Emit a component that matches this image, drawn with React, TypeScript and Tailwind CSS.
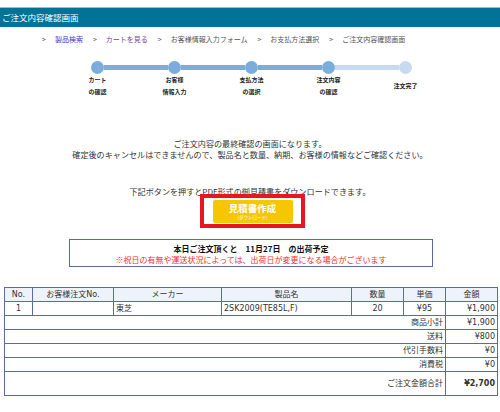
import React from 'react'

const crumbs = [
  { label: '製品検索', color: 'text-[#3a3ac8]' },
  { label: 'カートを見る', color: 'text-[#7b3fa0]' },
  { label: 'お客様情報入力フォーム', color: 'text-[#555]' },
  { label: 'お支払方法選択', color: 'text-[#555]' },
  { label: 'ご注文内容確認画面', color: 'text-[#555]' },
]

const steps = [
  ['カート', 'の確認'],
  ['お客様', '情報入力'],
  ['支払方法', 'の選択'],
  ['注文内容', 'の確認'],
  ['注文完了'],
]

const totals = [
  { label: '商品小計', value: '¥1,900' },
  { label: '送料', value: '¥800' },
  { label: '代引手数料', value: '¥0' },
  { label: '消費税', value: '¥0' },
]

const cell = 'border border-[#5b6aa8] px-[2px] h-[14px] leading-[12px]'

export default function App() {
  return (
    <div className="w-[500px] h-[412px] overflow-hidden bg-white text-[#333] font-['Noto_Sans_CJK_JP',sans-serif]">
      {/* Title bar */}
      <div className="mt-[7px] h-[20px] border-t border-[#8cc0d0] bg-[#007396] pl-[2px] text-[8.5px] leading-[19px] text-white">
        ご注文内容確認画面
      </div>

      {/* Breadcrumb */}
      <div className="mt-[6px] flex h-[12px] items-center pl-[42px] text-[7px] leading-[12px] text-[#555]">
        {crumbs.map((c) => (
          <React.Fragment key={c.label}>
            <span className="mr-[9px]">&gt;</span>
            <span className={`mr-[10px] ${c.color}`}>{c.label}</span>
          </React.Fragment>
        ))}
      </div>

      {/* Progress */}
      <div className="mt-[16px] ml-[91px] flex items-center">
        {steps.map((_, i) => (
          <React.Fragment key={i}>
            <div className={`h-[13px] w-[13px] rounded-full ${i < 4 ? 'bg-[#7aaddc]' : 'bg-[#c7daef]'}`} />
            {i < 4 && <div className={`h-[5px] w-[64px] ${i < 3 ? 'bg-[#7aaddc]' : 'bg-[#c7daef]'}`} />}
          </React.Fragment>
        ))}
      </div>
      <div className="ml-[59px] grid grid-cols-[repeat(5,77px)] items-center text-center text-[6px] font-bold leading-[12px] text-[#222]">
        {steps.map((s, i) => (
          <div key={i}>
            {s.map((l) => (
              <div key={l}>{l}</div>
            ))}
          </div>
        ))}
      </div>

      {/* Messages */}
      <div className="mt-[40px] text-center text-[8.1px] leading-[11px] text-[#333]">
        <p>ご注文内容の最終確認の画面になります。</p>
        <p>確定後のキャンセルはできませんので、製品名と数量、納期、お客様の情報などご確認ください。</p>
        <p className="mt-[26px]">下記ボタンを押すとPDF形式の御見積書をダウンロードできます。</p>
      </div>

      {/* Estimate button */}
      <div className="relative -mt-[3px] ml-[200px] flex h-[34px] w-[105px] items-start justify-center border-[4px] border-[#e8171f] bg-white pt-[2px]">
        <div className="flex h-[23px] w-[80px] flex-col items-center justify-center rounded-[2px] bg-[#f6c700] text-white">
          <span className="text-[9.5px] font-bold leading-[11px]">見積書作成</span>
          <span className="text-[4.5px] leading-[6px]">(ダウンロード)</span>
        </div>
      </div>

      {/* Shipping notice */}
      <div className="mt-[11px] ml-[69px] h-[28px] w-[364px] border border-[#5a6aae] pt-[3px] text-center text-[8px] leading-[11px]">
        <p className="font-bold text-[#111]">本日ご注文頂くと　11月27日　の出荷予定</p>
        <p className="text-[#ff2a2a]">※祝日の有無や運送状況によっては、出荷日が変更になる場合がございます</p>
      </div>

      {/* Order table */}
      <table className="mt-[20px] ml-[4px] w-[493px] table-fixed border-collapse text-[8px] font-['DejaVu_Sans','Noto_Sans_CJK_JP',sans-serif] text-[#333]">
        <colgroup>
          <col className="w-[28px]" />
          <col className="w-[81px]" />
          <col className="w-[108px]" />
          <col className="w-[130px]" />
          <col className="w-[52px]" />
          <col className="w-[42px]" />
          <col className="w-[52px]" />
        </colgroup>
        <thead>
          <tr className="bg-[#eef2fa]">
            <th className={`${cell} font-normal`}>No.</th>
            <th className={`${cell} font-normal`}>お客様注文No.</th>
            <th className={`${cell} font-normal`}>メーカー</th>
            <th className={`${cell} font-normal`}>製品名</th>
            <th className={`${cell} font-normal`}>数量</th>
            <th className={`${cell} font-normal`}>単価</th>
            <th className={`${cell} font-normal`}>金額</th>
          </tr>
        </thead>
        <tbody>
          <tr>
            <td className={`${cell} text-center`}>1</td>
            <td className={cell}></td>
            <td className={cell}>東芝</td>
            <td className={cell}>2SK2009(TE85L,F)</td>
            <td className={`${cell} text-center`}>20</td>
            <td className={`${cell} text-center`}>¥95</td>
            <td className={`${cell} text-right`}>¥1,900</td>
          </tr>
          {totals.map((t) => (
            <tr key={t.label}>
              <td colSpan={6} className={`${cell} text-right`}>{t.label}</td>
              <td className={`${cell} text-right`}>{t.value}</td>
            </tr>
          ))}
          <tr>
            <td colSpan={6} className="border border-[#5b6aa8] h-[24px] px-[2px] text-right">ご注文金額合計</td>
            <td className="border border-[#5b6aa8] h-[24px] px-[2px] text-right font-bold">¥2,700</td>
          </tr>
        </tbody>
      </table>
    </div>
  )
}
